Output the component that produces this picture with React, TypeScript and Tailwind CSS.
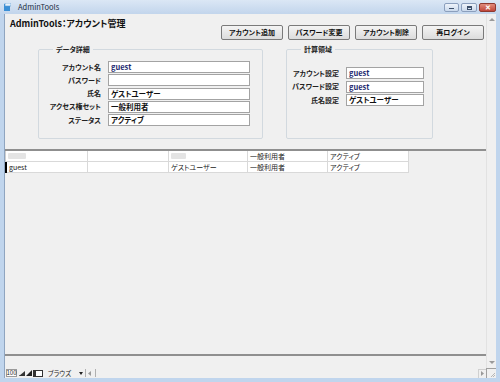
import React from 'react'

const jp = "font-['Noto_Sans_CJK_JP','Noto_Sans',sans-serif] [font-feature-settings:'palt']"

const buttons = ['アカウント追加', 'パスワード変更', 'アカウント削除', '再ログイン']

const detailFields = [
  { label: 'アカウント名', value: 'guest', latin: true },
  { label: 'パスワード', value: '' },
  { label: '氏名', value: 'ゲストユーザー' },
  { label: 'アクセス権セット', value: '一般利用者' },
  { label: 'ステータス', value: 'アクティブ' },
]

const calcFields = [
  { label: 'アカウント設定', value: 'guest', latin: true },
  { label: 'パスワード設定', value: 'guest', latin: true },
  { label: '氏名設定', value: 'ゲストユーザー' },
]

const rows = [
  { cells: ['', '', '', '一般利用者', 'アクティブ'], blurred: true, selected: false },
  { cells: ['guest', '', 'ゲストユーザー', '一般利用者', 'アクティブ'], blurred: false, selected: true },
]

const colWidths = ['w-[82px]', 'w-[81px]', 'w-[79px]', 'w-[80px]', 'w-[81px]']

function TitleBar() {
  return (
    <div className="h-[14px] flex items-center bg-gradient-to-b from-[#dbe7f5] to-[#c2d5ec] shrink-0">
      <svg width="7" height="8" viewBox="0 0 7 8" className="ml-[4px]">
        <rect x="0" y="1" width="6" height="7" fill="#3a8fd6" />
        <rect x="1" y="0" width="6" height="3" fill="#e8f2fb" stroke="#5a9bd4" strokeWidth="0.6" />
      </svg>
      <span className="ml-[7px] text-[7.5px] leading-none text-[#1b2a3d]">AdminTools</span>
      <div className="ml-auto mr-[4px] flex gap-[2px] mt-[1px]">
        <div className="w-[15px] h-[9px] rounded-[2px] border border-[#8b9fbd] bg-gradient-to-b from-[#eef3fa] to-[#cad9ec] flex items-center justify-center">
          <div className="w-[5px] h-[1.5px] bg-[#3c4f6a] mt-[2px]" />
        </div>
        <div className="w-[16px] h-[9px] rounded-[2px] border border-[#8b9fbd] bg-gradient-to-b from-[#eef3fa] to-[#cad9ec] flex items-center justify-center">
          <div className="w-[5px] h-[4px] border border-[#3c4f6a] border-t-2" />
        </div>
        <div className="w-[17px] h-[9px] rounded-[2px] border border-[#8e3a30] bg-gradient-to-b from-[#e08b7c] to-[#c0453a] flex items-center justify-center text-white text-[7px] leading-none font-bold">
          ✕
        </div>
      </div>
    </div>
  )
}

function Field({ label, value, latin, labelW, inputW }: { label: string; value: string; latin?: boolean; labelW: string; inputW: string }) {
  return (
    <div className="flex items-center h-[12px]">
      <span className={`${labelW} text-right text-[7px] font-bold text-[#222] leading-none whitespace-nowrap`}>{label}</span>
      <div className={`${inputW} ml-[7px] h-[12px] bg-white border border-[#a3a3a3] flex items-center pl-[2px] text-[7.5px] font-bold leading-none ${latin ? 'text-[#1d2a70]' : 'text-[#111]'}`}>
        {value}
      </div>
    </div>
  )
}

function GroupBox({ title, width, children, pt }: { title: string; width: string; children: React.ReactNode; pt: string }) {
  return (
    <fieldset className={`${width} h-[95px] border border-[#d2d9df] rounded-[2px] ${pt}`}>
      <legend className="ml-[14px] px-[3px] text-[7px] font-bold leading-[10px] text-[#222]">{title}</legend>
      {children}
    </fieldset>
  )
}

export default function App() {
  return (
    <div className={`w-[500px] h-[382px] bg-[#c0d5ed] flex flex-col overflow-hidden ${jp}`}>
      <TitleBar />
      <div className="flex-1 flex px-[4px] min-h-0">
        <div className="flex-1 flex flex-col bg-[#f0f0f0] border-l border-[#8fa5c0]">
          <div className="flex-1 flex min-h-0">
            {/* main area */}
            <div className="flex-1 flex flex-col">
              <div className="h-[135px] flex flex-col">
                <div className="h-[26px] flex items-start">
                  <span className="ml-[5px] mt-[4px] text-[9px] font-bold leading-[11px] text-[#111]">AdminTools：アカウント管理</span>
                  <div className="ml-auto mr-[2px] mt-[11px] flex gap-[5px]">
                    {buttons.map((b) => (
                      <div
                        key={b}
                        className="w-[62px] h-[15px] rounded-[2px] border border-[#7a7a7a] bg-gradient-to-b from-[#f4f4f4] to-[#dcdcdc] flex items-center justify-center text-[7px] font-bold leading-none text-[#111]"
                      >
                        {b}
                      </div>
                    ))}
                  </div>
                </div>
                <div className="flex mt-[4px] ml-[33px] gap-[23px]">
                  <GroupBox title="データ詳細" width="w-[225px]" pt="pt-[7px]">
                    <div className="flex flex-col gap-y-[1.3px]">
                      {detailFields.map((f) => (
                        <Field key={f.label} {...f} labelW="w-[62px]" inputW="w-[142px]" />
                      ))}
                    </div>
                  </GroupBox>
                  <GroupBox title="計算領域" width="w-[147px]" pt="pt-[13px]">
                    <div className="flex flex-col gap-y-[1.5px]">
                      {calcFields.map((f) => (
                        <Field key={f.label} {...f} labelW="w-[52px]" inputW="w-[78px]" />
                      ))}
                    </div>
                  </GroupBox>
                </div>
              </div>
              <div className="h-[2px] bg-[#8f8f8f]" />
              <div className="flex flex-col">
                {rows.map((r, i) => (
                  <div key={i} className="flex h-[11px]">
                    <div className={r.selected ? 'w-[2px] bg-black' : 'w-[1px] bg-[#cfcfcf]'} />
                    {r.cells.map((c, j) => (
                      <div
                        key={j}
                        className={`${j === 0 && r.selected ? 'w-[81px]' : colWidths[j]} h-[11px] bg-white border-r border-b border-[#d9d9d9] flex items-center pl-[2px] text-[7px] leading-none text-[#222]`}
                      >
                        {r.blurred && (j === 0 || j === 2) ? (
                          <div className={`${j === 0 ? 'w-[18px]' : 'w-[15px]'} h-[6px] bg-[#e4e4e4] rounded-[1px]`} />
                        ) : (
                          c
                        )}
                      </div>
                    ))}
                  </div>
                ))}
              </div>
              <div className="flex-1" />
              <div className="h-[2px] bg-[#8f8f8f] mb-[12px]" />
            </div>
            {/* vertical scrollbar */}
            <div className="w-[10px] flex flex-col items-center justify-between border-l border-[#e2e2e2] py-[3px]">
              <svg width="6" height="4" viewBox="0 0 6 4"><path d="M0 4 L3 1 L6 4 Z" fill="#9a9a9a" /></svg>
              <svg width="6" height="4" viewBox="0 0 6 4"><path d="M0 0 L3 3 L6 0 Z" fill="#9a9a9a" /></svg>
            </div>
          </div>
          {/* status bar */}
          <div className="h-[10px] flex items-center shrink-0">
            <div className="ml-[1px] w-[11px] h-[8px] border border-[#9a9a9a] bg-white flex items-center justify-center text-[6px] leading-none text-[#222]">100</div>
            <svg width="6" height="6" viewBox="0 0 6 6" className="ml-[2px]"><path d="M0 6 L6 6 L6 1 Z" fill="#333" /><path d="M0 6 L6 6" stroke="#333" /></svg>
            <svg width="6" height="6" viewBox="0 0 6 6" className="ml-[1px]"><path d="M0 6 L6 6 L6 0 Z" fill="#222" /></svg>
            <svg width="10" height="7" viewBox="0 0 10 7" className="ml-[1px]"><rect x="0.5" y="0.5" width="9" height="6" fill="#fff" stroke="#333" /><rect x="1" y="1" width="2" height="5" fill="#333" /></svg>
            <span className="ml-[5px] w-[31px] text-[6.5px] leading-none text-[#222]">ブラウズ</span>
            <svg width="4" height="3" viewBox="0 0 4 3"><path d="M0 0 L4 0 L2 3 Z" fill="#222" /></svg>
            <div className="ml-[2px] w-[1px] h-[8px] bg-[#b0b0b0]" />
            <svg width="4" height="5" viewBox="0 0 4 5" className="ml-[2px]"><path d="M3 0 L0 2.5 L3 5 Z" fill="#9a9a9a" /></svg>
            <div className="ml-[3px] w-[1px] h-[8px] bg-[#b0b0b0]" />
            <div className="ml-auto w-[8px] h-[9px] border-t border-l border-[#d0d0d0] flex items-center justify-center">
              <svg width="3" height="5" viewBox="0 0 3 5"><path d="M0 0 L3 2.5 L0 5 Z" fill="#9a9a9a" /></svg>
            </div>
            <div className="w-[10px] h-[10px] border-t border-l border-[#a0a0a0] flex items-end justify-end">
              <svg width="6" height="6" viewBox="0 0 6 6"><path d="M5 1 L1 5 M5 3 L3 5" stroke="#a8a8a8" strokeWidth="0.8" /></svg>
            </div>
          </div>
        </div>
      </div>
      <div className="h-[4px] shrink-0" />
    </div>
  )
}
